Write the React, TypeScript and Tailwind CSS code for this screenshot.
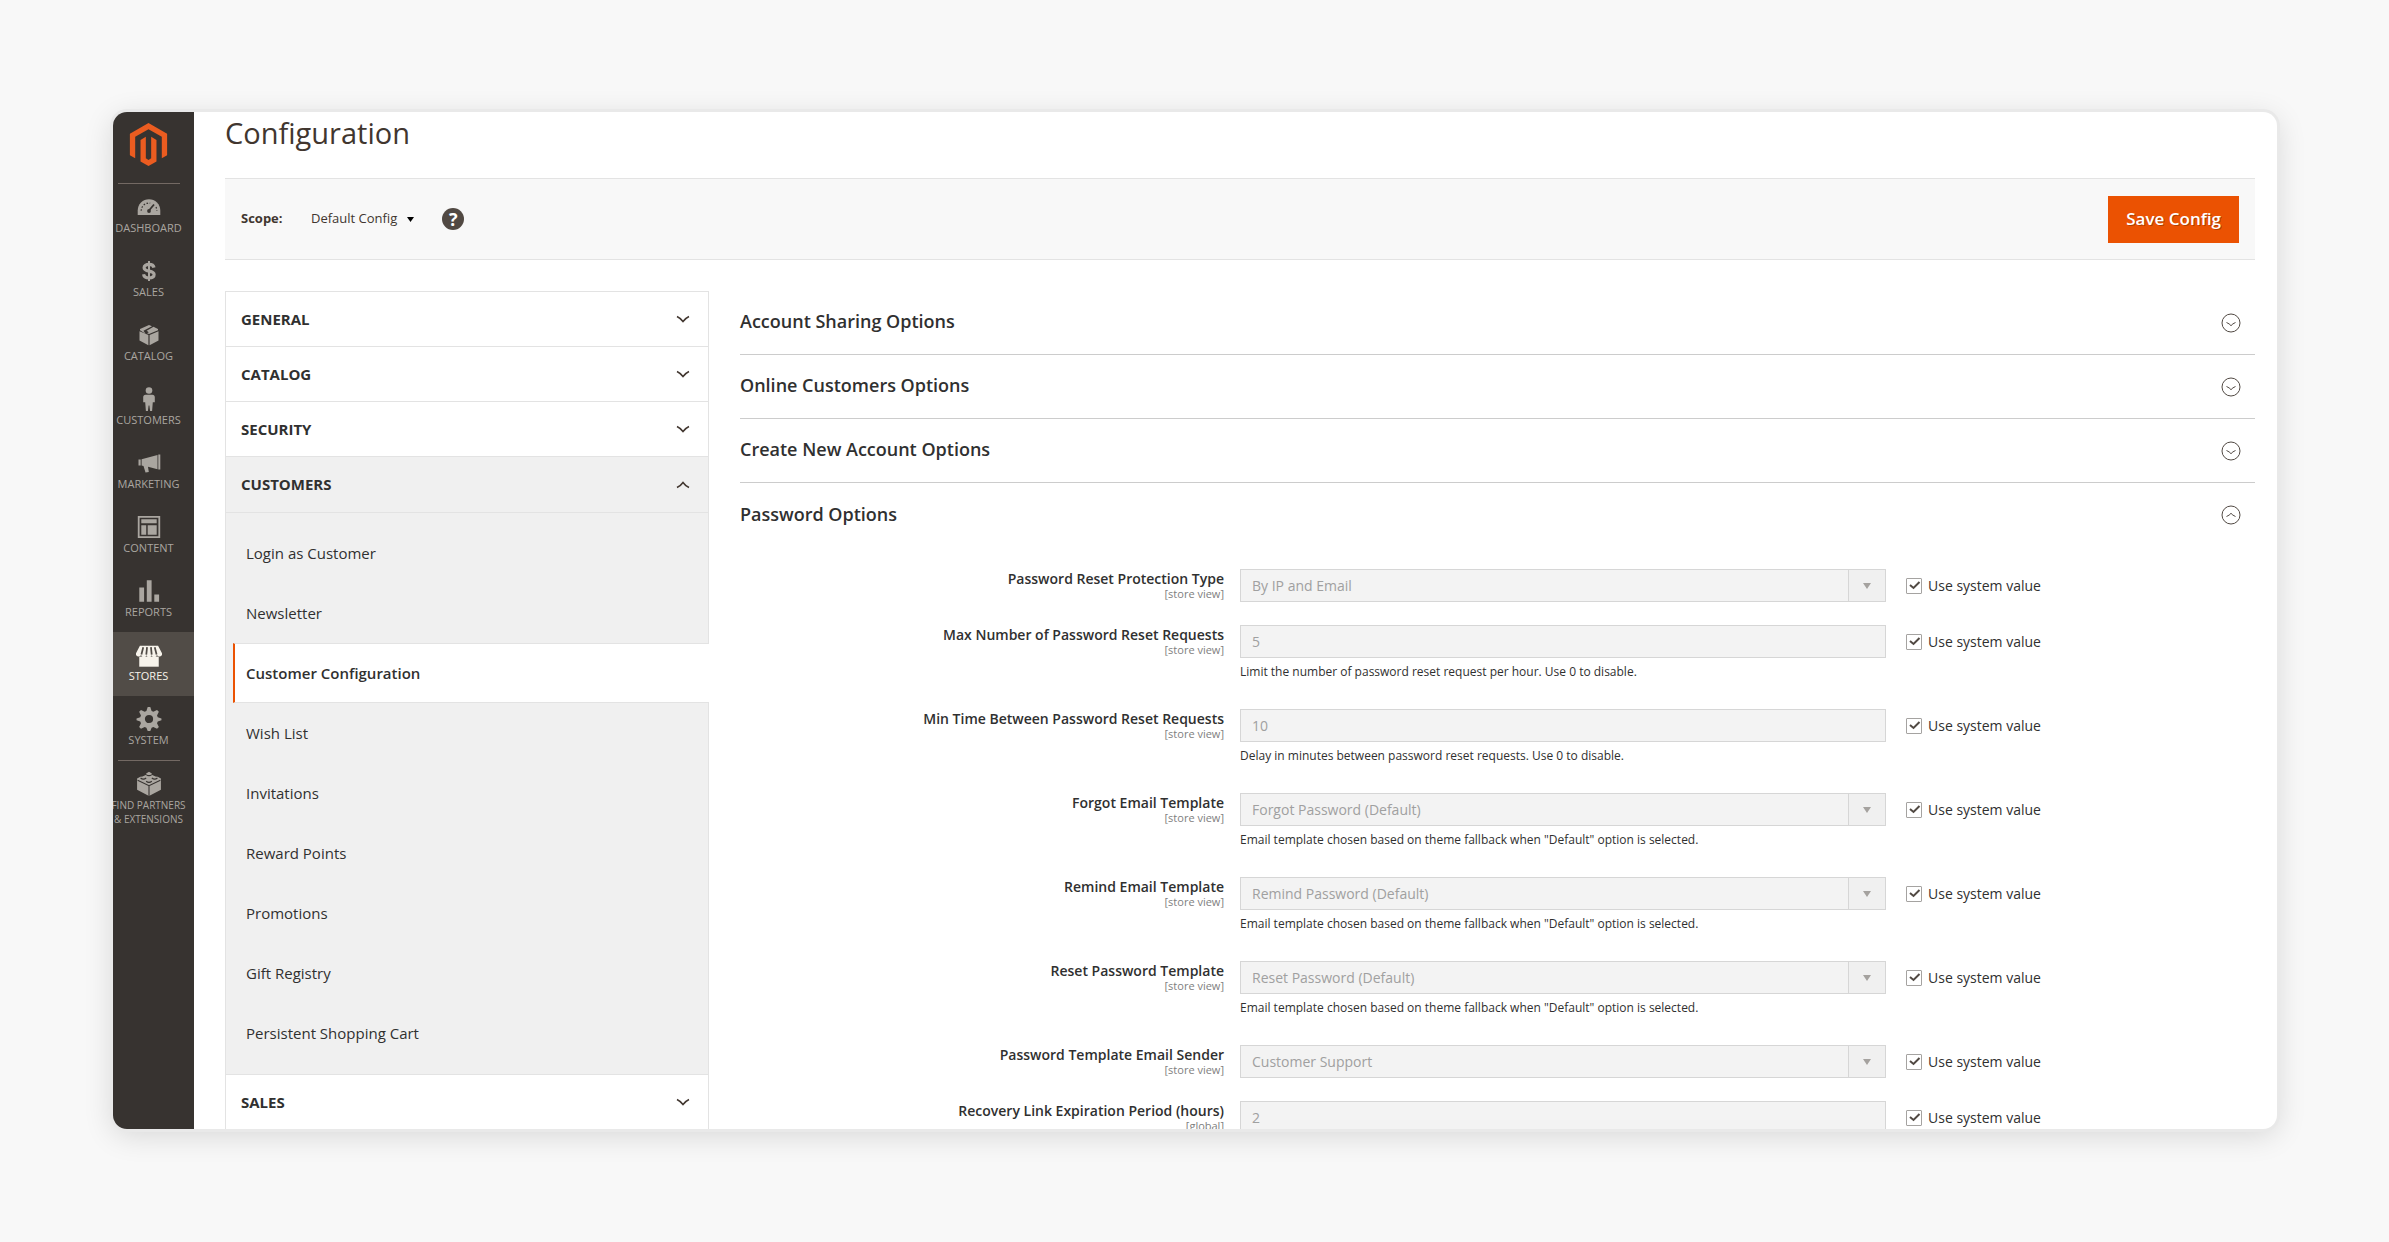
import type { ReactNode } from 'react';

function Icon({ children, box = 24, className = 'size-6' }: { children: ReactNode; box?: number; className?: string }) {
  return (
    <svg viewBox={`0 0 ${box} ${box}`} className={className} fill="currentColor" aria-hidden="true">
      {children}
    </svg>
  );
}

function Logo() {
  return (
    <svg viewBox="0 0 24 24" className="size-[43px] text-[#eb5c20]" fill="currentColor" aria-hidden="true">
      <path d="M12 24l-4.455-2.572v-12l2.97-1.715v12.001l1.485.902 1.485-.902V7.713l2.971 1.715v12L12 24zM22.391 6v12l-2.969 1.714V7.713L12 3.43 4.574 7.713v12.001L1.609 18V6L12 0l10.391 6z" />
    </svg>
  );
}

const menu: { label: string; icon: ReactNode; active?: boolean }[] = [
  {
    label: 'DASHBOARD',
    icon: (
      <Icon>
        <path d="M.7 20v-4.500a11.300 11.300 0 0 1 22.600 0V20z" />
        <g stroke="#373330" fill="none" strokeWidth="1.200">
          <path d="M4.200 15.800a7.800 7.800 0 0 1 9-7.700M19 12a7.800 7.800 0 0 1 .8 3.800" strokeDasharray="1.600 1.600" />
          <path d="M17 9.500l-4.600 5.500" strokeWidth="1.800" />
        </g>
        <circle cx="12" cy="16" r="1.900" fill="#373330" />
      </Icon>
    ),
  },
  {
    label: 'SALES',
    icon: (
      <Icon>
        <path
          d="M17 8.600C16.600 6.600 14.900 5.400 12 5.400c-3 0-4.900 1.300-4.900 3.300 0 4.700 10 2.200 10 6.800 0 2.100-2 3.400-5.100 3.400-3.200 0-5.100-1.400-5.400-3.700"
          fill="none"
          stroke="currentColor"
          strokeWidth="3.200"
        />
        <path d="M11 2h2v20h-2z" />
      </Icon>
    ),
  },
  {
    label: 'CATALOG',
    icon: (
      <Icon>
        <path d="M2.500 8.300l8.900 3.700v10.300l-8.900-4.700zM21.500 8.300L12.600 12v10.300l8.900-4.700zM12 2l3 1.200-8.500 4.600 2 3L3 7.300V6zM16.500 3.800L21 6v1.300L12 11l-2-.8 1.800-1-2.100-1.500z" />
      </Icon>
    ),
  },
  {
    label: 'CUSTOMERS',
    icon: (
      <Icon>
        <circle cx="12" cy="3.500" r="3.300" />
        <path d="M8.500 7.800h7c1.400 0 2.300 1 2.300 2.300v5.200h-2l-.7 8.700h-2l-.7-5.500h-.8L10.900 24h-2l-.7-8.700h-2v-5.200c0-1.300.9-2.300 2.300-2.300z" />
      </Icon>
    ),
  },
  {
    label: 'MARKETING',
    icon: (
      <Icon>
        <path d="M1.500 8.500h2.200v6H1.500zM4.600 8.300L20.500 4v14.200l-9.500-2.400.8 5.200-3.300.4-2-6.400-1.900-.5zM21.300 3.500h2v15h-2z" />
      </Icon>
    ),
  },
  {
    label: 'CONTENT',
    icon: (
      <Icon>
        <path fillRule="evenodd" d="M.8 1h22.400v22H.8zM2.600 2.800v18.400h18.800V2.800z" />
        <path d="M4.300 4.300h15.400v4H4.300zM4.300 10.300h4.900v9.400H4.300zM10.700 10.300h9v9.400h-9z" />
      </Icon>
    ),
  },
  {
    label: 'REPORTS',
    icon: (
      <Icon>
        <path d="M2.300 8.500h4.800v14.200H2.300zM9.800 1.300h4.800v21.400H9.800zM17.300 15.500h4.800v7.200h-4.800z" />
      </Icon>
    ),
  },
  {
    label: 'STORES',
    active: true,
    icon: (
      <Icon className="size-[26px]">
        <path d="M3 13.500h18v9.300H3z" />
        <path d="M3.600 3.500h16.800L24 10.300a2.400 2.400 0 0 1-4.800 1.300 2.400 2.400 0 0 1-4.800 0 2.400 2.400 0 0 1-4.800 0 2.400 2.400 0 0 1-4.800 0A2.400 2.400 0 0 1 0 10.300z" />
        <path d="M6.700 4.800L5 11.600M10.200 4.800l-.7 6.800M13.800 4.800l.7 6.800M17.300 4.800l1.700 6.800" stroke="#514c47" strokeWidth="1.600" />
      </Icon>
    ),
  },
  {
    label: 'SYSTEM',
    icon: (
      <Icon className="size-[26px]">
        <path
          fillRule="evenodd"
          d="M10.800 1h2.400l1.200 3.600 1.600.7 3.400-1.700 1.700 1.700-1.700 3.400.7 1.600 3.400 1.200v1.700l-3.400 1.200-.7 1.600 1.700 3.400-1.700 1.700-3.400-1.700-1.600.7L13.200 23h-2.400l-1.200-2.900-1.600-.7-3.400 1.700-1.700-1.700L4.600 16l-.7-1.600L.5 13.200v-1.700l3.400-1.200.7-1.600-1.700-3.400 1.700-1.700L8 5.300l1.600-.7zM12 8.200a3.800 3.800 0 1 0 0 7.600 3.800 3.800 0 0 0 0-7.600z"
        />
      </Icon>
    ),
  },
];

function MenuItem({ label, icon, active, small }: { label: ReactNode; icon: ReactNode; active?: boolean; small?: boolean }) {
  return (
    <li>
      <a
        href="#"
        className={
          active
            ? 'flex h-16 flex-col items-center gap-0.5 bg-[#514c47] pt-[11px] pr-2.5 text-[#f7f3eb]'
            : 'flex h-16 flex-col items-center gap-0.5 pt-[11px] pr-2.5 text-[#aaa6a0]'
        }
      >
        <span className="flex h-6 items-center">{icon}</span>
        <span
          className={
            small
              ? 'text-center text-[10px] leading-[14px] whitespace-nowrap'
              : 'text-center text-[11px] leading-[14px] whitespace-nowrap'
          }
        >
          {label}
        </span>
      </a>
    </li>
  );
}

function Sidebar() {
  return (
    <nav className="w-[81px] shrink-0 bg-[#373330]">
      <a href="#" aria-label="Home" className="flex justify-center pt-[11px] pr-2.5 pb-[17px]">
        <Logo />
      </a>
      <hr className="mr-3.5 ml-[5px] border-[#736963]" />
      <ul>
        {menu.map((m) => (
          <MenuItem key={m.label} {...m} />
        ))}
      </ul>
      <hr className="mr-3.5 ml-[5px] border-[#736963]" />
      <ul>
        <MenuItem
          small
          label={
            <>
              FIND PARTNERS
              <br />& EXTENSIONS
            </>
          }
          icon={
            <Icon className="size-[26px]">
              <path d="M12 .8l2.600 1.500v1.200L18 5l2 .4 3 1.600v10.200L12 23 1 17.200V7l3-1.600L6 5l3.400-1.500V2.300z" />
              <g fill="none" stroke="#373330" strokeWidth="1">
                <path d="M1.500 8.500L12 13.500l10.500-5M12 13.500V23" />
                <path d="M9.400 3.300q2.600 2 5.200 0M4.200 6.500q2.600 2 5.200 0M14.600 6.500q2.600 2 5.200 0M9.400 9.500q2.600 2 5.200 0" />
              </g>
            </Icon>
          }
        />
      </ul>
    </nav>
  );
}

function Chevron({ up }: { up?: boolean }) {
  return (
    <svg viewBox="0 0 14 8" className="h-2 w-3.5" fill="none" stroke="#41362f" strokeWidth="1.500" aria-hidden="true">
      <path d={up ? 'M1 6.500C4 5 6 3 7 1.500C8 3 10 5 13 6.500' : 'M1 1.500C4 3 6 5 7 6.500C8 5 10 3 13 1.500'} />
    </svg>
  );
}

function TabButton({ label, open }: { label: string; open?: boolean }) {
  return (
    <button
      type="button"
      aria-expanded={!!open}
      className={
        open
          ? 'flex h-14 w-full items-center justify-between border-b border-[#e3e3e3] bg-[#f0f0f0] pr-[18px] pl-[15px] text-[15px] font-bold text-[#303030]'
          : 'flex h-[54px] w-full items-center justify-between pr-[18px] pl-[15px] text-[15px] font-bold text-[#303030]'
      }
    >
      {label}
      <Chevron up={open} />
    </button>
  );
}

const links = [
  'Login as Customer',
  'Newsletter',
  'Customer Configuration',
  'Wish List',
  'Invitations',
  'Reward Points',
  'Promotions',
  'Gift Registry',
  'Persistent Shopping Cart',
];

function ConfigTabs() {
  return (
    <aside className="w-[484px] shrink-0 self-start border border-[#e3e3e3]">
      {['GENERAL', 'CATALOG', 'SECURITY'].map((t) => (
        <div key={t} className="border-b border-[#e3e3e3]">
          <TabButton label={t} />
        </div>
      ))}
      <TabButton label="CUSTOMERS" open />
      <ul className="border-b border-[#e3e3e3] bg-[#f0f0f0] pt-2.5 pb-[11px] text-[15px] text-[#303030]">
        {links.map((l) => (
          <li key={l}>
            {l === 'Customer Configuration' ? (
              <a
                href="#"
                aria-current="page"
                className="-mr-px ml-[7px] flex h-[60px] items-center border-y border-l-2 border-y-[#e3e3e3] border-l-[#eb5202] bg-white pl-[11px] font-semibold"
              >
                {l}
              </a>
            ) : (
              <a href="#" className="flex h-[60px] items-center pl-5">
                {l}
              </a>
            )}
          </li>
        ))}
      </ul>
      <TabButton label="SALES" />
    </aside>
  );
}

function SectionHeader({ label, open }: { label: string; open?: boolean }) {
  return (
    <button
      type="button"
      aria-expanded={!!open}
      className={
        open
          ? 'flex h-16 w-full items-center justify-between pr-3.5 text-[18px] font-semibold text-[#303030]'
          : 'flex h-16 w-full items-center justify-between border-b border-[#cccccc] pr-3.5 text-[18px] font-semibold text-[#303030]'
      }
    >
      <span className="pb-0.5">{label}</span>
      <svg viewBox="0 0 20 20" className="size-5" fill="none" stroke="#514943" aria-hidden="true">
        <circle cx="10" cy="10" r="9" />
        <path d={open ? 'M5.500 11.500Q8.500 10.300 10 8.300Q11.500 10.300 14.500 11.500' : 'M5.500 9.500Q8.500 10.700 10 12.700Q11.500 10.700 14.500 9.500'} />
      </svg>
    </button>
  );
}

type Field = { id: string; label: string; scope: string; value: string; select?: boolean; hint?: string };

const themeHint = 'Email template chosen based on theme fallback when "Default" option is selected.';

const fields: Field[] = [
  { id: 'protection', label: 'Password Reset Protection Type', scope: '[store view]', value: 'By IP and Email', select: true },
  {
    id: 'max',
    label: 'Max Number of Password Reset Requests',
    scope: '[store view]',
    value: '5',
    hint: 'Limit the number of password reset request per hour. Use 0 to disable.',
  },
  {
    id: 'min',
    label: 'Min Time Between Password Reset Requests',
    scope: '[store view]',
    value: '10',
    hint: 'Delay in minutes between password reset requests. Use 0 to disable.',
  },
  { id: 'forgot', label: 'Forgot Email Template', scope: '[store view]', value: 'Forgot Password (Default)', select: true, hint: themeHint },
  { id: 'remind', label: 'Remind Email Template', scope: '[store view]', value: 'Remind Password (Default)', select: true, hint: themeHint },
  { id: 'reset', label: 'Reset Password Template', scope: '[store view]', value: 'Reset Password (Default)', select: true, hint: themeHint },
  { id: 'sender', label: 'Password Template Email Sender', scope: '[store view]', value: 'Customer Support', select: true },
  { id: 'recovery', label: 'Recovery Link Expiration Period (hours)', scope: '[global]', value: '2' },
];

function FieldRow({ id, label, scope, value, select, hint }: Field) {
  return (
    <div className={hint ? 'grid h-21 grid-cols-[500fr_646fr_369fr]' : 'grid h-14 grid-cols-[500fr_646fr_369fr]'}>
      <div className="pt-px pr-4 text-right">
        <label htmlFor={id} className="block text-[14px] leading-[18px] font-semibold text-[#303030]">
          {label}
        </label>
        <span className="block text-[11px] leading-[12px] text-[#808080]">{scope}</span>
      </div>
      <div>
        {select ? (
          <div className="relative">
            <select
              id={id}
              disabled
              className="block h-[33px] w-full appearance-none border border-[#d6d6d6] bg-[#f3f3f3] px-[11px] text-[14px] text-[#a0a0a0] opacity-100"
            >
              <option>{value}</option>
            </select>
            <span className="pointer-events-none absolute inset-y-0 right-0 flex w-[38px] items-center justify-center border border-[#d6d6d6] bg-[#f0f0f0]">
              <svg viewBox="0 0 8 6" className="h-1.5 w-2" fill="#a5a29f" aria-hidden="true">
                <path d="M0 0h8L4 6z" />
              </svg>
            </span>
          </div>
        ) : (
          <input
            id={id}
            type="text"
            disabled
            defaultValue={value}
            className="block h-[33px] w-full border border-[#d6d6d6] bg-[#f3f3f3] px-[11px] text-[14px] text-[#a0a0a0]"
          />
        )}
        {hint && <p className="pt-[5px] text-[12px] leading-[18px] text-[#303030]">{hint}</p>}
      </div>
      <label className="flex h-[33px] items-center gap-1.5 pl-5 text-[14px] text-[#303030]">
        <span className="relative size-4">
          <input type="checkbox" defaultChecked className="block size-4 appearance-none rounded-[1px] border border-[#a5a3a1] bg-white" />
          <svg viewBox="0 0 16 16" className="pointer-events-none absolute inset-0 size-4" fill="none" stroke="#514943" strokeWidth="2" aria-hidden="true">
            <path d="M4 7l3.500 3L13.500 4" />
          </svg>
        </span>
        Use system value
      </label>
    </div>
  );
}

export default function App() {
  return (
    <div className="flex h-screen bg-[#f8f8f8] pt-28 pr-28 pb-[113px] pl-[113px] font-['Open_Sans',sans-serif]">
      <div className="flex min-w-0 flex-1 overflow-hidden rounded-[14px] bg-white shadow-[0_0_0_3px_#e9e9e9,0_6px_30px_rgba(0,0,0,0.14)]">
        <Sidebar />
        <main className="min-w-0 flex-1 pr-[22px] pl-[31px]">
          <h1 className="h-[66px] text-[29px] leading-[42px] text-[#41362f]">Configuration</h1>
          <div className="flex h-[82px] items-center border-y border-[#e3e3e3] bg-[#f8f8f8] px-4 text-[13px] text-[#41362f]">
            <span className="w-[70px] font-bold">Scope:</span>
            <button type="button" className="flex items-center gap-2.5">
              Default Config
              <svg viewBox="0 0 7 5" className="h-[5px] w-[7px]" fill="#000000" aria-hidden="true">
                <path d="M0 0h7L3.500 5z" />
              </svg>
            </button>
            <a
              href="#"
              aria-label="Help"
              className="ml-7 flex size-[22px] items-center justify-center rounded-full bg-[#514943] text-[18px] font-bold text-white"
            >
              ?
            </a>
            <button
              type="button"
              className="ml-auto h-[47px] bg-[#eb5202] px-[18px] text-[17px] font-semibold text-white [text-shadow:1px_1px_0_rgba(0,0,0,0.25)]"
            >
              Save Config
            </button>
          </div>
          <div className="flex gap-[31px] pt-[31px]">
            <ConfigTabs />
            <section className="min-w-0 flex-1">
              <SectionHeader label="Account Sharing Options" />
              <SectionHeader label="Online Customers Options" />
              <SectionHeader label="Create New Account Options" />
              <SectionHeader label="Password Options" open />
              <div className="pt-[22px]">
                {fields.map((f) => (
                  <FieldRow key={f.id} {...f} />
                ))}
              </div>
            </section>
          </div>
        </main>
      </div>
    </div>
  );
}
